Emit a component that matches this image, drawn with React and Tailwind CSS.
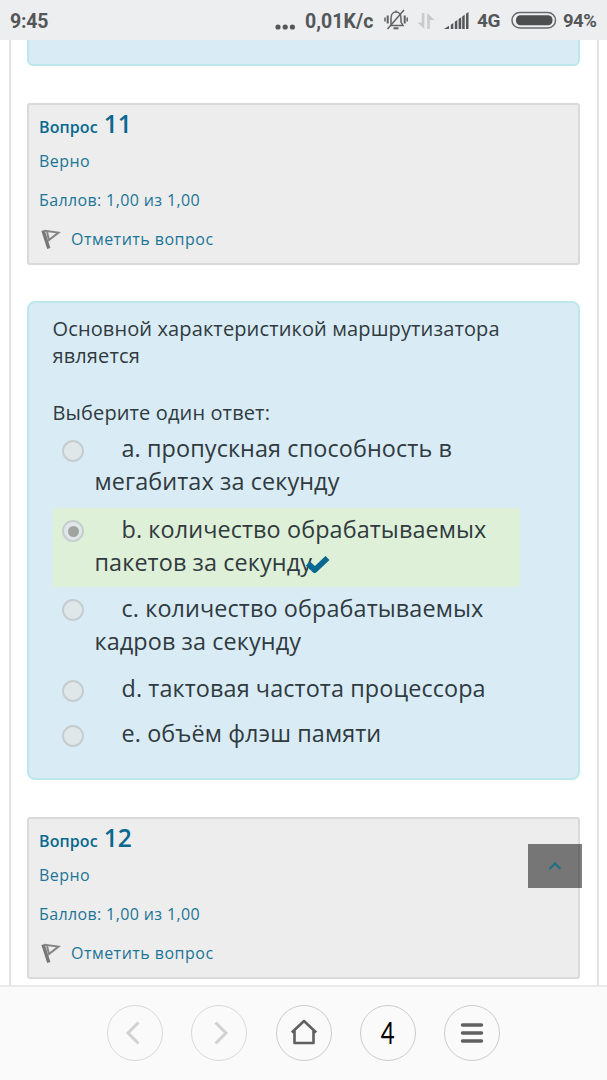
import React from "react";

function StatusBar() {
  return (
    <header className="flex h-[40px] shrink-0 items-center bg-[#edeef0] pl-[10px] pr-[11px] font-['Roboto',sans-serif] text-[19px] font-bold leading-[40px] text-[#555658]">
      <span className="pt-[3px] text-[19.5px] tracking-[-0.2px]">9:45</span>
      <svg className="ml-auto mr-[9px] mt-[13px]" width="21" height="6" viewBox="0 0 21 6" fill="#555658">
        <circle cx="3" cy="3" r="2.6" />
        <circle cx="10.2" cy="3" r="2.6" />
        <circle cx="17.4" cy="3" r="2.6" />
      </svg>
      <span className="w-[69px] whitespace-nowrap pt-[3px] text-[19.5px] tracking-[0.05px]">0,01K/c</span>
      <svg className="ml-[10px]" width="24" height="22" viewBox="0 0 24 22" fill="none" stroke="#606163" strokeWidth="1.5">
        <path d="M7 15.5V9C7 5.5 9 3 12 3C15 3 17 5.5 17 9V13L19 16.5H7M12 3V1.5" />
        <path d="M3.5 20L20 1" />
        <path d="M9.5 19.3H14.5" strokeWidth="2" />
        <path d="M3.7 6.5V14.5M20.7 6.5V14.5" strokeWidth="2" />
        <path d="M1 8.5V12.5M23.2 8.5V12.5" />
      </svg>
      <svg className="ml-[9px] mt-[2px]" width="18" height="18" viewBox="0 0 18 18" fill="#c9cacc">
        <path d="M4.8 1H7.4V17L0.5 10.5H4.8ZM10.2 1L17.5 8H12.8V17H10.2Z" />
      </svg>
      <svg className="ml-[9px] mt-[2px]" width="27" height="18" viewBox="0 0 27 18" fill="#555658">
        <path d="M0 17L5 13.8V17ZM6.8 12.7L9.3 11V17H6.8ZM10.8 9.8L13.3 8.1V17H10.8ZM14.6 7L17.2 5.3V17H14.6ZM18.2 4.5L20.7 2.8V17H18.2ZM22 1.8L24.5 0V17H22Z" />
      </svg>
      <span className="ml-[6px] w-[24px] whitespace-nowrap pt-[2px] tracking-[-0.3px]">4G</span>
      <svg className="ml-[10px]" width="46" height="18" viewBox="0 0 46 18">
        <rect x="1" y="1.5" width="43.5" height="15.5" rx="7.75" fill="none" stroke="#68696b" strokeWidth="1.5" />
        <rect x="5" y="4.3" width="36.5" height="10" rx="4.5" fill="#4d4e50" />
      </svg>
      <span className="ml-[6px] w-[33px] whitespace-nowrap pt-[2px] text-[18.5px] tracking-[-0.5px]">94%</span>
    </header>
  );
}

function FlagIcon() {
  return (
    <svg width="22" height="24" viewBox="0 0 22 24" fill="none">
      <path d="M4 3.5L9.8 21.5" stroke="#777" strokeWidth="3.4" />
      <path d="M5.5 3.8L19.5 5.6L10 13L8 5" stroke="#858585" strokeWidth="2" />
    </svg>
  );
}

function QuestionInfo({ number }) {
  return (
    <section className="flex h-[162px] shrink-0 flex-col rounded-[3px] border-2 border-[#dadada] bg-[#ededed] pl-[10px] text-[16px] text-[#1b7596]">
      <h2 className="flex h-[39px] items-baseline gap-[6px] whitespace-nowrap font-semibold leading-[37px] text-[#08688f]">
        <span className="text-[16px] tracking-[0.1px]">Вопрос</span>
        <span className="text-[24.5px]">{number}</span>
      </h2>
      <p className="h-[34px] leading-[34px] tracking-[0.45px]">Верно</p>
      <p className="mt-[5px] h-[34px] leading-[34px] tracking-[0.37px]">Баллов: 1,00 из 1,00</p>
      <div className="mt-[5px] flex h-[34px] items-center">
        <FlagIcon />
        <a className="ml-[10px] tracking-[0.48px]">Отметить вопрос</a>
      </div>
    </section>
  );
}

function Radio({ checked }) {
  return (
    <span className="flex size-[22px] shrink-0 items-center justify-center rounded-full border-2 border-[#c5cdd0] bg-[#dfe7e9]">
      {checked && <span className="size-[11px] rounded-full bg-[#a0a4a0]" />}
    </span>
  );
}

const ANSWERS = [
  { lines: ["a. пропускная способность в", "мегабитах за секунду"], row: "h-[80px] pt-[3px]", dot: "pt-[9px]" },
  { lines: ["b. количество обрабатываемых", "пакетов за секунду"], row: "h-[79px] pt-[4px] bg-[#dff0d8]", dot: "pt-[8px]", checked: true },
  { lines: ["c. количество обрабатываемых", "кадров за секунду"], row: "h-[80px] pt-[4px]", dot: "pt-[8px]" },
  { lines: ["d. тактовая частота процессора"], row: "h-[46px] pt-[4px]", dot: "pt-[9px]" },
  { lines: ["e. объём флэш памяти"], row: "h-[46px] pt-[3px]", dot: "pt-[9px]" },
];

function Answer({ answer }) {
  return (
    <li className={`flex w-[467px] pl-[9px] ${answer.row}`}>
      <div className={answer.dot}>
        <Radio checked={answer.checked} />
      </div>
      <div className="ml-[10.5px] whitespace-nowrap text-[23.4px] leading-[33px] tracking-[0.1px]">
        <p className="h-[33px] pl-[27px] leading-[34px]">{answer.lines[0]}</p>
        {answer.lines[1] && (
          <p className="flex h-[34px] items-center leading-[34px]">
            {answer.lines[1]}
            {answer.checked && (
              <svg
                className="ml-[-6px] mt-[5px]"
                width="25"
                height="20"
                viewBox="0 0 25 20"
                fill="none"
                stroke="#08688f"
                strokeWidth="5.8"
                strokeLinejoin="round"
              >
                <path d="M1.8 8.5L8.8 15L21.5 3" />
              </svg>
            )}
          </p>
        )}
      </div>
    </li>
  );
}

function QuestionBody() {
  return (
    <section className="mb-[37px] mt-[36px] h-[478.5px] shrink-0 rounded-[8px] border-2 border-[#bce8eb] bg-[#d9ecf6] pl-[24px] pt-[12px] text-[20px] tracking-[0.12px] text-[#303a3f]">
      <p className="-ml-[0.5px] h-[84px] whitespace-nowrap leading-[27px]">
        Основной характеристикой маршрутизатора
        <br />
        является
      </p>
      <p className="-ml-[0.5px] h-[29px] whitespace-nowrap leading-[27px]">Выберите один ответ:</p>
      <ul>
        {ANSWERS.map((a) => (
          <Answer key={a.lines[0]} answer={a} />
        ))}
      </ul>
    </section>
  );
}

function NavButton({ children, faint }) {
  return (
    <button
      className={`flex size-[56px] items-center justify-center rounded-full border ${faint ? "border-[#d9d9d9]" : "border-[#cbcbcb]"}`}
    >
      {children}
    </button>
  );
}

function BottomBar() {
  return (
    <nav className="flex h-[95px] shrink-0 justify-center gap-[28.2px] border-t-2 border-[#ebebeb] bg-[#fafafa] pt-[18px]">
      <NavButton faint>
        <svg width="30" height="30" viewBox="0 0 30 30" fill="none" stroke="#d2d2d2" strokeWidth="3">
          <path d="M18.5 4.5L8 15L18.5 25.5" />
        </svg>
      </NavButton>
      <NavButton faint>
        <svg width="30" height="30" viewBox="0 0 30 30" fill="none" stroke="#d2d2d2" strokeWidth="3">
          <path d="M11.5 4.5L22 15L11.5 25.5" />
        </svg>
      </NavButton>
      <NavButton>
        <svg width="30" height="30" viewBox="0 0 30 30" fill="none" stroke="#606060" strokeWidth="2.6" strokeLinejoin="round">
          <path d="M2.8 14.5L15 3L27.2 14.5M5.5 12.5V25H24.5V12.5" />
        </svg>
      </NavButton>
      <NavButton>
        <span className="-mt-[2px] inline-block scale-x-[0.8] font-['Lato',sans-serif] text-[30px] leading-none text-black">4</span>
      </NavButton>
      <NavButton>
        <svg width="30" height="30" viewBox="0 0 30 30" stroke="#606060" strokeWidth="3.4" strokeLinecap="round">
          <path d="M5.5 7H24.5M5.5 15H24.5M5.5 23H24.5" />
        </svg>
      </NavButton>
    </nav>
  );
}

export default function App() {
  return (
    <div className="relative flex h-[1080px] w-[607px] flex-col overflow-hidden bg-white font-['Open_Sans',sans-serif]">
      <StatusBar />
      <main className="ml-[9px] mr-[8px] flex h-[945px] flex-col overflow-hidden border-x-2 border-[#e3e3e3] pl-[16px] pr-[17px]">
        <div className="mb-[37px] h-[26px] shrink-0 rounded-b-[6px] border-2 border-t-0 border-[#bce8eb] bg-[#d9ecf6]" />
        <QuestionInfo number="11" />
        <QuestionBody />
        <QuestionInfo number="12" />
      </main>
      <BottomBar />
      <button className="absolute left-[528px] top-[844px] flex h-[44px] w-[54px] items-center justify-center bg-black/50">
        <svg width="14" height="10" viewBox="0 0 14 10" fill="none" stroke="#1b7084" strokeWidth="2">
          <path d="M1.5 8L7 2.5L12.5 8" />
        </svg>
      </button>
    </div>
  );
}
